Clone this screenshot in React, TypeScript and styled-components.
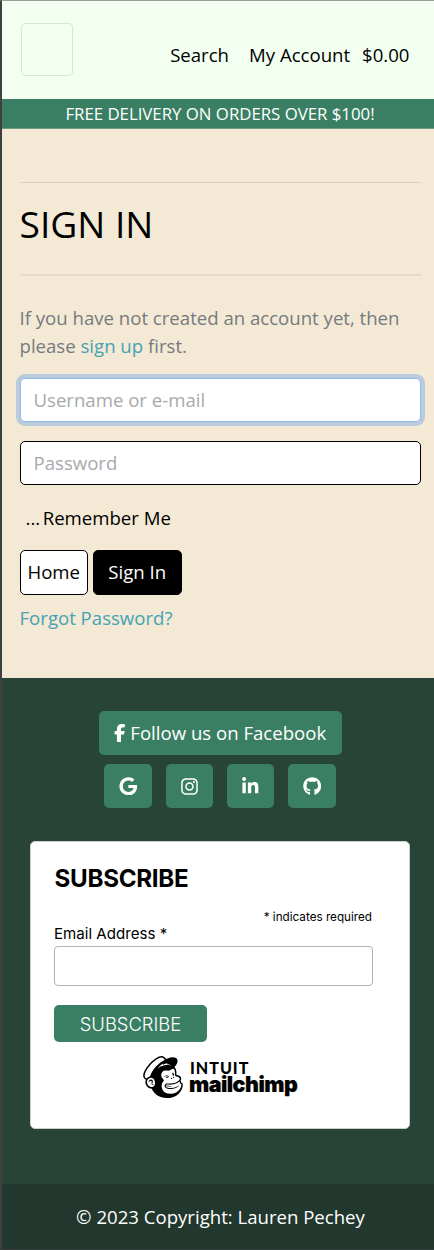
import React from "react";
import styled, { createGlobalStyle } from "styled-components";
import { FaGoogle, FaInstagram, FaLinkedinIn, FaGithub } from "react-icons/fa";
import { SiMailchimp } from "react-icons/si";

const GlobalStyle = createGlobalStyle`
  *, *::before, *::after { box-sizing: border-box; }
  body {
    margin: 0;
    background: #f4e9d5;
    color: #000;
    font-family: "Open Sans", sans-serif;
    font-size: 18.6px;
    line-height: 28px;
  }
  a { color: #46a2b4; text-decoration: none; }
  input, button { font: inherit; }
`;

const Page = styled.div`
  height: 1250px;
  display: flex;
  flex-direction: column;
  border-left: 2px solid #3f4042;
  border-top: 1px solid #999f98;
  overflow: hidden;
`;

const Header = styled.header`
  height: 98px;
  flex: none;
  display: flex;
  align-items: flex-start;
  justify-content: space-between;
  padding: 22px 24.5px 0 18.5px;
  background: #f3fff1;
`;

const MenuToggle = styled.button`
  width: 52.5px;
  height: 53px;
  padding: 0;
  border: 1px solid #dae5d8;
  border-radius: 4px;
  background: transparent;
`;

const Nav = styled.nav`
  display: flex;
  margin-top: 18px;
`;

const NavLink = styled.span<{ $gap?: number }>`
  margin-left: ${(p) => p.$gap ?? 0}px;
  white-space: nowrap;
`;

const Banner = styled.div`
  height: 30px;
  flex: none;
  padding-left: 4px;
  background: #3a7f63;
  border-bottom: 1px solid #6e9d82;
  color: #fff;
  font-size: 16.8px;
  line-height: 29px;
  text-align: center;
`;

const Main = styled.main`
  height: 549px;
  flex: none;
  padding: 53px 13px 0 17.5px;
`;

const Rule = styled.hr<{ $thick?: boolean }>`
  height: ${(p) => (p.$thick ? 2 : 1)}px;
  margin: 0;
  border: 0;
  background: ${(p) => (p.$thick ? "#e5dbc7" : "#dbd1bf")};
`;

const Title = styled.h1`
  margin: 17px 0 27px;
  font-size: 37.2px;
  font-weight: 400;
  line-height: 47px;
`;

const Intro = styled.p`
  margin: 28px 0 18px;
  color: #757b80;
`;

const Field = styled.input<{ $focused?: boolean }>`
  display: block;
  width: 100%;
  height: 44px;
  margin: 0 0 19px;
  padding: 0 13px 2px;
  border: 1px solid ${(p) => (p.$focused ? "#8abcf8" : "#000")};
  border-radius: 5px;
  background: #fff;
  outline: none;
  box-shadow: ${(p) => (p.$focused ? "0 0 0 4px #bccbd9" : "none")};
  &::placeholder { color: #a7a9ac; opacity: 1; }
`;

const Remember = styled.label`
  display: flex;
  gap: 2.5px;
  padding-left: 6px;
`;

const Actions = styled.div`
  display: flex;
  gap: 5px;
  margin: 18px 0 9px;
`;

const ActionButton = styled.button<{ $dark?: boolean }>`
  width: ${(p) => (p.$dark ? 88.5 : 68.5)}px;
  height: 45px;
  padding: 0 0 2px;
  border: 1px solid #000;
  border-radius: 5px;
  background: ${(p) => (p.$dark ? "#000" : "#fff")};
  color: ${(p) => (p.$dark ? "#fff" : "#000")};
`;

const Footer = styled.footer`
  flex: 1;
  display: flex;
  flex-direction: column;
  align-items: center;
  background: #284437;
  color: #fff;
`;

const SocialButton = styled.a<{ $width: number }>`
  width: ${(p) => p.$width}px;
  height: 44px;
  display: flex;
  align-items: center;
  justify-content: center;
  gap: 5px;
  border-radius: 5px;
  background: #3a7f63;
  color: #fff;
  white-space: nowrap;
`;

const Follow = styled.div`
  margin: 33px 0 9px 4px;
`;

const SocialRow = styled.div`
  display: flex;
  gap: 14px;
  margin-left: 4px;
`;

const Card = styled.form`
  width: 380px;
  height: 288px;
  margin: 33px 0 0 4px;
  padding: 24px 37px 0 23px;
  border: 1px solid #c9d0cc;
  border-radius: 5px;
  background: #fff;
  color: #000;
  font-family: Inter, sans-serif;
`;

const CardTitle = styled.h2`
  margin: 0 0 0 0.5px;
  font-size: 24.2px;
  font-weight: 700;
  line-height: 26px;
  letter-spacing: -0.3px;
`;

const Hint = styled.div`
  margin-top: 18px;
  font-size: 11.7px;
  line-height: 14px;
  text-align: right;
`;

const Label = styled.label`
  display: block;
  font-size: 15.1px;
  line-height: 20px;
`;

const EmailInput = styled.input`
  display: block;
  width: 319px;
  height: 40px;
  margin-top: 2px;
  border: 1px solid #b1b4b3;
  border-radius: 4px;
  background: #fff;
`;

const SubscribeButton = styled.button`
  display: block;
  width: 153px;
  height: 37px;
  margin-top: 19px;
  padding: 0;
  border: 0;
  border-radius: 5px;
  background: #3a7f63;
  color: #fff;
  font-size: 18.4px;
  font-weight: 300;
`;

const Brand = styled.div`
  display: flex;
  align-items: center;
  margin: 14px 0 0 88px;
`;

const BrandText = styled.div`
  display: flex;
  flex-direction: column;
  margin-left: 5px;
`;

const Intuit = styled.span`
  margin-left: 1px;
  font-family: Lato, sans-serif;
  font-size: 16px;
  font-weight: 900;
  line-height: 14px;
  letter-spacing: 1px;
`;

const Mailchimp = styled.span`
  font-size: 21.4px;
  font-weight: 900;
  line-height: 19px;
  letter-spacing: -0.5px;
  -webkit-text-stroke: 0.2px #000;
`;

const Copyright = styled.div`
  align-self: stretch;
  height: 66px;
  margin-top: auto;
  padding-left: 5px;
  background: #22372d;
  border-bottom: 1px solid #343d3a;
  line-height: 66px;
  text-align: center;
`;

const FacebookIcon = () => (
  <svg width="11.5" height="18" viewBox="0 0 320 512" fill="currentColor" aria-hidden="true">
    <path d="M80 299.3V512H196V299.3h86.5l18-97.8H196V166.9c0-51.7 20.3-71.5 72.7-71.5c16.3 0 29.4 .4 37 1.2V7.9C291.4 4 256.4 0 236.2 0C129.3 0 80 50.5 80 159.4v42.1H14v97.8H80z" />
  </svg>
);

export default function App() {
  return (
    <>
      <GlobalStyle />
      <Page>
        <Header>
          <MenuToggle aria-label="Menu" />
          <Nav>
            <NavLink>Search</NavLink>
            <NavLink $gap={20}>My Account</NavLink>
            <NavLink $gap={12}>$0.00</NavLink>
          </Nav>
        </Header>
        <Banner>FREE DELIVERY ON ORDERS OVER $100!</Banner>
        <Main>
          <Rule />
          <Title>SIGN IN</Title>
          <Rule $thick />
          <Intro>
            If you have not created an account yet, then please <a href="#signup">sign up</a> first.
          </Intro>
          <Field $focused placeholder="Username or e-mail" />
          <Field type="password" placeholder="Password" />
          <Remember>
            <span>...</span>
            <span>Remember Me</span>
          </Remember>
          <Actions>
            <ActionButton>Home</ActionButton>
            <ActionButton $dark>Sign In</ActionButton>
          </Actions>
          <a href="#forgot">Forgot Password?</a>
        </Main>
        <Footer>
          <Follow>
            <SocialButton $width={243}>
              <FacebookIcon />
              Follow us on Facebook
            </SocialButton>
          </Follow>
          <SocialRow>
            <SocialButton $width={48}><FaGoogle size={18.5} /></SocialButton>
            <SocialButton $width={47}><FaInstagram size={19} /></SocialButton>
            <SocialButton $width={47}><FaLinkedinIn size={18.5} /></SocialButton>
            <SocialButton $width={48}><FaGithub size={18.5} /></SocialButton>
          </SocialRow>
          <Card>
            <CardTitle>SUBSCRIBE</CardTitle>
            <Hint>* indicates required</Hint>
            <Label htmlFor="email">Email Address *</Label>
            <EmailInput id="email" />
            <SubscribeButton type="button">SUBSCRIBE</SubscribeButton>
            <Brand>
              <SiMailchimp size={42} />
              <BrandText>
                <Intuit>INTUIT</Intuit>
                <Mailchimp>mailchimp</Mailchimp>
              </BrandText>
            </Brand>
          </Card>
          <Copyright>© 2023 Copyright: Lauren Pechey</Copyright>
        </Footer>
      </Page>
    </>
  );
}
